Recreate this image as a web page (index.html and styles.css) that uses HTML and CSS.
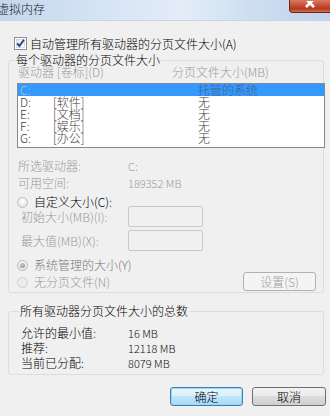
FILE: index.html
```html
<!DOCTYPE html>
<html lang="zh-CN">
<head>
<meta charset="utf-8">
<title>虚拟内存</title>
<link rel="stylesheet" href="styles.css">
</head>
<body>
<div class="window">
  <div class="titlebar">
    <span class="title">虚拟内存</span>
    <div class="close">
      <svg class="close-x" width="14" height="8" viewBox="0 0 14 8"><path d="M3 -2 L11 6 M11 -2 L3 6" stroke="#ffffff" stroke-width="2.6" fill="none"/></svg>
    </div>
  </div>

  <div class="check-row">
    <span class="checkbox">
      <svg width="13" height="13" viewBox="0 0 13 13">
        <defs><linearGradient id="cb" x1="0" y1="0" x2="1" y2="1"><stop offset="0" stop-color="#dfe4ea"/><stop offset="1" stop-color="#ffffff"/></linearGradient></defs>
        <rect x="0.5" y="0.5" width="12" height="12" fill="#fff" stroke="#8e8f8f"/>
        <rect x="2.5" y="2.5" width="8" height="8" fill="url(#cb)" stroke="#c3c7cc" stroke-width="0.6"/>
        <path d="M3.2 6.4 L5.4 9 L10 2.8" stroke="#1f3f8f" stroke-width="1.9" fill="none"/>
      </svg>
    </span>
    <span>自动管理所有驱动器的分页文件大小(A)</span>
  </div>

  <fieldset class="group g1">
    <legend>每个驱动器的分页文件大小</legend>
    <div class="list-head gray">
      <span class="h1">驱动器 [卷标](D)</span>
      <span>分页文件大小(MB)</span>
    </div>
    <div class="listbox">
      <div class="row sel"><span class="drv">C:</span><span class="lbl"></span><span class="size">托管的系统</span></div>
      <div class="row"><span class="drv">D:</span><span class="lbl">[软件]</span><span class="size">无</span></div>
      <div class="row"><span class="drv">E:</span><span class="lbl">[文档]</span><span class="size">无</span></div>
      <div class="row"><span class="drv">F:</span><span class="lbl">[娱乐]</span><span class="size">无</span></div>
      <div class="row"><span class="drv">G:</span><span class="lbl">[办公]</span><span class="size">无</span></div>
    </div>

    <div class="info gray">
      <div class="kv"><span class="k">所选驱动器:</span><span class="v">C:</span></div>
      <div class="kv"><span class="k">可用空间:</span><span class="v">189352 MB</span></div>
    </div>

    <div class="radio-row custom">
      <span class="radio"></span><span>自定义大小(C):</span>
    </div>
    <div class="field-row gray">
      <span class="fk">初始大小(MB)(I):</span><span class="input"></span>
    </div>
    <div class="field-row second gray">
      <span class="fk">最大值(MB)(X):</span><span class="input"></span>
    </div>

    <div class="bottom-row">
      <div class="radios">
        <div class="radio-row sys"><span class="radio on"></span><span>系统管理的大小(Y)</span></div>
        <div class="radio-row none"><span class="radio"></span><span>无分页文件(N)</span></div>
      </div>
      <span class="btn set">设置(S)</span>
    </div>
  </fieldset>

  <fieldset class="group g2">
    <legend>所有驱动器分页文件大小的总数</legend>
    <div class="kv2"><span class="k">允许的最小值:</span><span class="v">16 MB</span></div>
    <div class="kv2"><span class="k">推荐:</span><span class="v">12118 MB</span></div>
    <div class="kv2"><span class="k">当前已分配:</span><span class="v">8079 MB</span></div>
  </fieldset>

  <div class="buttons">
    <span class="btn ok">确定</span>
    <span class="btn cancel">取消</span>
  </div>
</div>
</body>
</html>
```
FILE: styles.css
```css
html, body {
  margin: 0;
  padding: 0;
  background: #f0f0f0;
}
body {
  font-family: "Noto Sans CJK SC", "Noto Sans", sans-serif;
  font-size: 12px;
  font-weight: 300;
  line-height: 12px;
  color: #000;
}
.window {
  width: 330px;
  height: 416px;
  overflow: hidden;
  background: #f0f0f0;
  display: flex;
  flex-direction: column;
}
.titlebar {
  height: 20px;
  flex: none;
  display: flex;
  align-items: flex-start;
  background: linear-gradient(90deg, #c4d7ee 0%, #d8e5f4 35%, #e3edf8 55%, #cfdff1 75%, #bfd3ec 100%);
  border-bottom: 1px solid #c6d3e2;
}
.title {
  margin-left: -3px;
  margin-top: 2px;
  font-size: 12px;
  line-height: 13px;
  color: #1a1a1a;
}
.close {
  flex: none;
  margin-left: auto;
  width: 41px;
  height: 13px;
  box-sizing: border-box;
  border: 1px solid #6e2216;
  border-top: none;
  border-right: none;
  border-radius: 0 0 0 4px;
  background-color: #c24a30;
  background-image: linear-gradient(180deg, #d77a62 0%, #c5492e 50%, #b53a20 75%, #d0735a 100%);
  display: flex;
  justify-content: center;
  align-items: flex-end;
  padding-bottom: 3px;
}
.close-x { display: block; }

.check-row {
  display: flex;
  align-items: center;
  height: 13px;
  margin: 16px 0 0 14px;
}
.checkbox {
  width: 13px;
  height: 13px;
  margin-right: 3px;
}
.checkbox svg { display: block; }

.group {
  margin: 0 0 0 8px;
  width: 316px;
  box-sizing: border-box;
  border: 1px solid #d5dfe5;
  border-radius: 3px;
  min-width: 0;
}
.group legend {
  padding: 0 1px;
  margin-left: -2px;
  line-height: 12px;
  height: 12px;
}
.g1 {
  margin-top: 4px;
  padding: 0 0 1px 8px;
}
.gray { color: #9a9a9a; }

.list-head {
  display: flex;
  height: 12px;
  padding-left: 1px;
}
.list-head .h1 { width: 154px; }

.listbox {
  margin-top: 5px;
  width: 308px;
  height: 65px;
  box-sizing: border-box;
  border: 1px solid #828790;
  background: #fff;
}
.row {
  display: flex;
  height: 12px;
  line-height: 12px;
  padding-left: 2px;
  color: #3c3c3c;
}
.row.sel {
  height: 12px;
  background: #3399ff;
  color: #3f5c86;
}
.row.sel .drv { color: #a8c8ec; }
.drv { width: 33px; }
.lbl { width: 145px; }
.size { color: #444; }
.row.sel .size { color: #44628c; }

.info { margin-top: 9px; padding-left: 1px; }
.kv {
  display: flex;
  height: 17px;
  align-items: center;
}
.kv .k { width: 110px; }
.kv .v { font-size: 11px; }

.radio-row {
  display: flex;
  align-items: center;
  height: 12px;
}
.radio-row.custom { margin-top: 5px; }
.radio {
  flex: none;
  width: 11px;
  height: 11px;
  box-sizing: border-box;
  border-radius: 50%;
  border: 1px solid #bcbcbc;
  background: radial-gradient(circle at 50% 35%, #ffffff 0%, #e6e6e6 70%, #dcdcdc 100%);
  margin-right: 6px;
  display: flex;
  justify-content: center;
  align-items: center;
}
.radio.on::after {
  content: "";
  width: 5px;
  height: 5px;
  border-radius: 50%;
  background: radial-gradient(circle at 40% 35%, #c8c8c8, #8c8c8c);
}
.radio-row.sys { color: #7a7a7a; }
.radio-row.none { margin-top: 5px; color: #9a9a9a; }
.radio-row.none .radio { border-color: #cfcfcf; background: #ececec; }

.field-row {
  display: flex;
  align-items: center;
  height: 21px;
  margin-top: -2px;
}
.field-row.second { margin-top: 3px; }
.fk { width: 107px; padding-left: 4px; }
.input {
  width: 75px;
  height: 21px;
  box-sizing: border-box;
  border: 1px solid #c9c9c9;
  border-radius: 2px;
  background: #f0f0f0;
}

.bottom-row {
  display: flex;
  align-items: flex-start;
  margin-top: 8px;
}
.radios { width: 226px; }
.btn {
  display: flex;
  justify-content: center;
  align-items: center;
  box-sizing: border-box;
  height: 19px;
  border-radius: 3px;
}
.btn.set {
  width: 73px;
  margin-top: 13px;
  border: 1px solid #adb2b5;
  background: #f4f4f4;
  color: #a0a0a0;
}

.g2 {
  margin-top: 12px;
  padding: 8px 0 4px 12px;
}
.kv2 {
  display: flex;
  height: 15px;
  align-items: center;
}
.kv2 .k { width: 107px; }
.kv2 .v { font-size: 11px; color: #111; }

.buttons {
  display: flex;
  justify-content: flex-end;
  gap: 9px;
  margin-top: 12px;
  padding-right: 4px;
}
.btn.ok {
  width: 73px;
  border: 1px solid #3c7fb1;
  background: linear-gradient(180deg, #eaf6fd 0%, #d9f0fc 45%, #bee6fd 50%, #a7d9f5 100%);
  box-shadow: inset 0 0 0 1px #9ed7f5;
}
.btn.cancel {
  width: 74px;
  border: 1px solid #707070;
  background: linear-gradient(180deg, #f2f2f2 0%, #ebebeb 45%, #dddddd 50%, #cfcfcf 100%);
}
```
